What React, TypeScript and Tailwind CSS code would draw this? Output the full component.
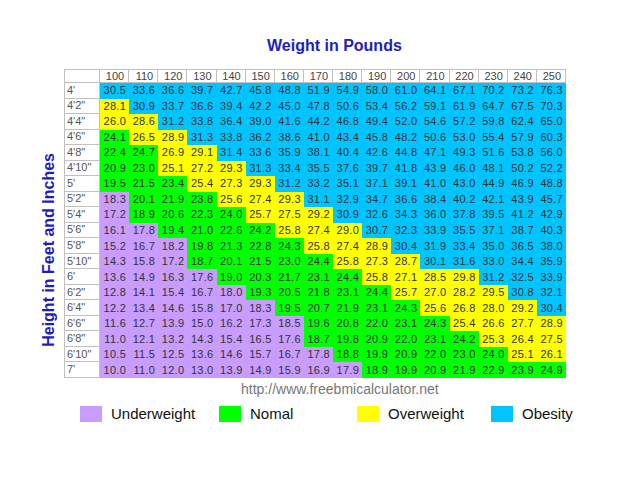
const weights = [100, 110, 120, 130, 140, 150, 160, 170, 180, 190, 200, 210, 220, 230, 240, 250];

const heights = [
  { label: "4'", inches: 48 },
  { label: "4'2\"", inches: 50 },
  { label: "4'4\"", inches: 52 },
  { label: "4'6\"", inches: 54 },
  { label: "4'8\"", inches: 56 },
  { label: "4'10\"", inches: 58 },
  { label: "5'", inches: 60 },
  { label: "5'2\"", inches: 62 },
  { label: "5'4\"", inches: 64 },
  { label: "5'6\"", inches: 66 },
  { label: "5'8\"", inches: 68 },
  { label: "5'10\"", inches: 70 },
  { label: "6'", inches: 72 },
  { label: "6'2\"", inches: 74 },
  { label: "6'4\"", inches: 76 },
  { label: "6'6\"", inches: 78 },
  { label: "6'8\"", inches: 80 },
  { label: "6'10\"", inches: 82 },
  { label: "7'", inches: 84 },
];

const bmiColor = (bmi: number) => {
  if (bmi < 18.5) return "bg-[#c99cff]";
  if (bmi < 25) return "bg-[#00ff00]";
  if (bmi < 30) return "bg-[#ffff00]";
  return "bg-[#00c4ff]";
};

const legend = [
  { name: "Underweight", color: "bg-[#c99cff]", width: "w-[139px]" },
  { name: "Nomal", color: "bg-[#00ff00]", width: "w-[138px]" },
  { name: "Overweight", color: "bg-[#ffff00]", width: "w-[134px]" },
  { name: "Obesity", color: "bg-[#00c4ff]", width: "w-[90px]" },
];

const App = () => {
  return (
    <div className="w-[640px] h-[480px] bg-white font-['Liberation_Sans',Arial,sans-serif] overflow-hidden">
      <div className="pt-[37px] pl-[267px] text-[16px] leading-[18px] font-bold text-[#1e1ebe]">
        Weight in Pounds
      </div>

      <div className="flex mt-[14px]">
        <div className="w-[64px] pl-[40px] pt-[84px]">
          <div className="[writing-mode:vertical-rl] rotate-180 text-[16px] leading-[18px] font-bold text-[#1e1ebe] whitespace-nowrap">
            Height in Feet and Inches
          </div>
        </div>

        <div className="w-[502px] h-[309px] grid grid-cols-[36px_repeat(16,minmax(0,1fr))] grid-rows-[14px_repeat(19,minmax(0,1fr))] text-[11px] leading-none text-[#333]">
          <div className="border border-[#c0c0c0] bg-white" />
          {weights.map((w) => (
            <div
              key={w}
              className="border-t border-r border-b border-[#c0c0c0] bg-white flex items-center justify-end pr-[4px] text-[#444]"
            >
              {w}
            </div>
          ))}

          {heights.map((h) => (
            <div key={h.label} className="contents">
              <div className="border-l border-r border-b border-[#c0c0c0] bg-white flex items-center pl-[2px] text-[#555]">
                {h.label}
              </div>
              {weights.map((w) => {
                const bmi = (703 * w) / (h.inches * h.inches);
                return (
                  <div
                    key={w}
                    className={`${bmiColor(bmi)} flex items-center justify-end pr-[3px] tracking-[0.3px]`}
                  >
                    {bmi.toFixed(1)}
                  </div>
                );
              })}
            </div>
          ))}
        </div>
      </div>

      <div className="mt-[3px] pl-[241px] text-[14px] leading-4 text-[#777]">
        http://www.freebmicalculator.net
      </div>

      <div className="mt-[9px] pl-[80px] flex items-center">
        {legend.map((item) => (
          <div key={item.name} className={`${item.width} flex items-center gap-[9px]`}>
            <div className={`${item.color} w-[22px] h-[16px]`} />
            <span className="text-[15px] leading-4 text-[#111]">{item.name}</span>
          </div>
        ))}
      </div>
    </div>
  );
};

export default App;
